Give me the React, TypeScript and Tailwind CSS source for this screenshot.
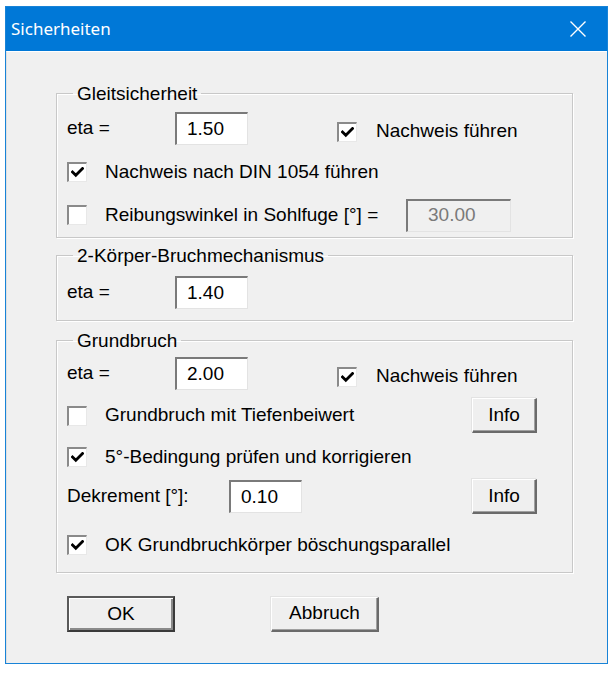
import React from "react";

const font = { fontFamily: '"Liberation Sans", Arial, sans-serif' };

function CheckBox({ checked }: { checked?: boolean }) {
  return (
    <div className="w-[20px] h-[20px] shrink-0 bg-white border-t-2 border-l-2 border-b border-r border-t-[#8a8a8a] border-l-[#8a8a8a] border-b-[#e8e8e8] border-r-[#e8e8e8] flex items-center justify-center">
      {checked && (
        <svg width="13" height="11" viewBox="0 0 13 11">
          <polyline points="1.5,5 4.8,8.3 11.5,1.5" fill="none" stroke="#000" strokeWidth="2.8" strokeLinecap="square" />
        </svg>
      )}
    </div>
  );
}

function Input({ value, width, disabled }: { value: string; width: string; disabled?: boolean }) {
  return (
    <div
      className={`${width} h-[33px] shrink-0 flex items-center border-t-2 border-l-2 border-b border-r border-t-[#7a7a7a] border-l-[#7a7a7a] border-b-[#e3e3e3] border-r-[#e3e3e3] ${
        disabled ? "bg-[#f0f0f0] text-[#7a7a7a] pl-[20px]" : "bg-white text-black pl-[10px]"
      }`}
    >
      {value}
    </div>
  );
}

function Button({ label, width, def }: { label: string; width: string; def?: boolean }) {
  return (
    <div
      className={`${width} flex items-center justify-center bg-[#efefef] ${
        def
          ? "h-[36px] border-2 border-t-[#5a5a5a] border-l-[#5a5a5a] border-b-[#3a3a3a] border-r-[#3a3a3a] shadow-[inset_1px_1px_0_#ffffff,inset_-2px_-2px_0_#8a8a8a]"
          : "h-[35px] border-t border-l border-b-2 border-r-2 border-t-[#ffffff] border-l-[#ffffff] border-b-[#6a6a6a] border-r-[#6a6a6a] shadow-[inset_-1px_-1px_0_#a0a0a0,-1px_-1px_0_#e3e3e3]"
      }`}
    >
      {label}
    </div>
  );
}

function Group({ title, children, className }: { title: string; children: React.ReactNode; className: string }) {
  return (
    <fieldset className={`${className} w-[517px] border border-[#c8c8c8] shadow-[inset_1px_1px_0_#ffffff,1px_1px_0_#ffffff] p-0 m-0`}>
      <legend className="ml-[16px] px-[4px] leading-[21px] h-[21px]">{title}</legend>
      {children}
    </fieldset>
  );
}

export default function App() {
  return (
    <div className="w-[613px] h-[676px] bg-white overflow-hidden text-[19px] text-black" style={font}>
      <div className="ml-[5px] mt-[6px] w-[603px] h-[658px] border border-[#1883d7] flex flex-col">
        <div className="h-[44px] bg-[#0078d7] flex items-center justify-between text-white shrink-0">
          <span className="pl-[5px] text-[17px]" style={{ fontFamily: '"Noto Sans", "Open Sans", sans-serif' }}>
            Sicherheiten
          </span>
          <svg width="16" height="16" viewBox="0 0 16 16" className="mr-[21px]">
            <path d="M0.5 0.5 L15.5 15.5 M15.5 0.5 L0.5 15.5" stroke="#fff" strokeWidth="1.4" />
          </svg>
        </div>
        <div className="flex-1 bg-[#f0f0f0] border-t border-l border-t-[#ffffff] border-l-[#e0e0e0] flex flex-col pl-[49px]">
          <Group title="Gleitsicherheit" className="mt-[31px]">
            <div className="flex flex-col pl-[10px] pb-[5px]">
              <div className="mt-[8px] h-[33px] flex items-center">
                <span className="w-[108px]">eta =</span>
                <Input value="1.50" width="w-[73px]" />
                <div className="ml-[89px] mt-[6px] flex items-center">
                  <CheckBox checked />
                  <span className="ml-[19px]">Nachweis führen</span>
                </div>
              </div>
              <div className="mt-[15px] h-[24px] flex items-center">
                <CheckBox checked />
                <span className="ml-[18px]">Nachweis nach DIN 1054 führen</span>
              </div>
              <div className="mt-[14px] h-[34px] flex items-center">
                <CheckBox />
                <span className="ml-[18px] w-[301px]">Reibungswinkel in Sohlfuge [°] =</span>
                <Input value="30.00" width="w-[105px]" disabled />
              </div>
            </div>
          </Group>
          <Group title="2-Körper-Bruchmechanismus" className="mt-[7px]">
            <div className="flex flex-col pl-[10px] pb-[11px]">
              <div className="mt-[10px] h-[33px] flex items-center">
                <span className="w-[108px]">eta =</span>
                <Input value="1.40" width="w-[73px]" />
              </div>
            </div>
          </Group>
          <Group title="Grundbruch" className="mt-[9px]">
            <div className="flex flex-col pl-[10px] pb-[15px]">
              <div className="mt-[6px] h-[33px] flex items-center">
                <span className="w-[108px]">eta =</span>
                <Input value="2.00" width="w-[73px]" />
                <div className="ml-[89px] mt-[6px] flex items-center">
                  <CheckBox checked />
                  <span className="ml-[19px]">Nachweis führen</span>
                </div>
              </div>
              <div className="mt-[8px] h-[35px] flex items-center">
                <CheckBox />
                <span className="ml-[18px] w-[367px]">Grundbruch mit Tiefenbeiwert</span>
                <Button label="Info" width="w-[65px]" />
              </div>
              <div className="mt-[12px] h-[24px] flex items-center">
                <CheckBox checked />
                <span className="ml-[18px]">5°-Bedingung prüfen und korrigieren</span>
              </div>
              <div className="mt-[10px] h-[35px] flex items-center">
                <span className="w-[162px]">Dekrement [°]:</span>
                <Input value="0.10" width="w-[73px]" />
                <div className="ml-[170px]">
                  <Button label="Info" width="w-[65px]" />
                </div>
              </div>
              <div className="mt-[19px] h-[24px] flex items-center">
                <CheckBox checked />
                <span className="ml-[18px]">OK Grundbruchkörper böschungsparallel</span>
              </div>
            </div>
          </Group>
          <div className="mt-[23px] flex items-center ml-[11px]">
            <Button label="OK" width="w-[108px]" def />
            <div className="ml-[96px]">
              <Button label="Abbruch" width="w-[108px]" />
            </div>
          </div>
        </div>
      </div>
    </div>
  );
}
